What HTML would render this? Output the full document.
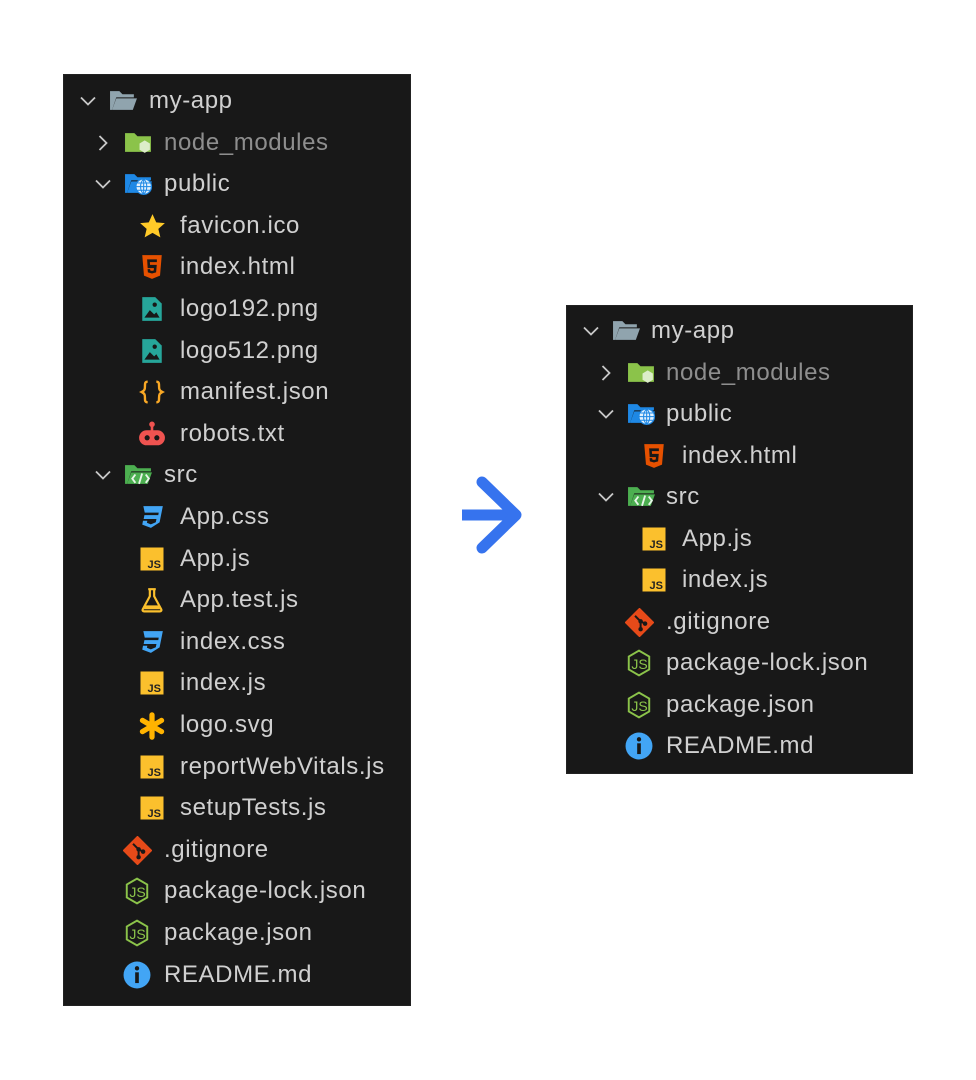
<!DOCTYPE html>
<html><head><meta charset="utf-8"><style>
html,body{margin:0;padding:0;background:#fff;width:976px;height:1080px;overflow:hidden}
.p{position:absolute;background:#181818;outline:1px solid #222}
.r{position:absolute;left:0;height:42px;width:100%}
.r span{position:absolute;top:0;line-height:42px;font-family:"Liberation Sans",sans-serif;font-size:24px;color:#d0d0d0;white-space:nowrap;letter-spacing:0.6px}
.r svg{position:absolute}
.g{color:#8e8e8e!important}
</style></head><body>
<svg width="0" height="0" style="position:absolute">
<defs>
<symbol id="cd" viewBox="0 0 18 18"><path d="M2 5.5 L9 12.5 L16 5.5" fill="none" stroke="#c8c8c8" stroke-width="1.8"/></symbol>
<symbol id="cr" viewBox="0 0 18 18"><path d="M5.5 2 L12.5 9 L5.5 16" fill="none" stroke="#c8c8c8" stroke-width="1.8"/></symbol>
<symbol id="fg" viewBox="0 0 28 22"><path d="M1 2h9l3 3h11v3H7L3 20H1z" fill="#90a4ae"/><path d="M7 9h20l-4 11H3z" fill="#90a4ae"/></symbol>
<symbol id="fn" viewBox="0 0 28 22"><path d="M1 2h9l3 3h13v15H1z" fill="#8bc34a"/><path d="M20 9l5 3v6l-5 3-5-3v-6z" fill="#dcedc8"/></symbol>
<symbol id="fp" viewBox="0 0 28 22"><path d="M1 2h9l3 3h13v3H7L3 20H1z" fill="#1e88e5"/><path d="M7 9h20l-4 11H3z" fill="#1e88e5"/><circle cx="19" cy="14" r="7.5" fill="#e3f2fd" stroke="#1e88e5" stroke-width="1.2"/><path d="M11.5 14h15M19 6.5v15M13 10.5h12M13 17.5h12M19 6.5c-4 4-4 11 0 15M19 6.5c4 4 4 11 0 15" fill="none" stroke="#1e88e5" stroke-width="1"/></symbol>
<symbol id="fs" viewBox="0 0 28 22"><path d="M1 2h9l3 3h13v3H7L3 20H1z" fill="#4caf50"/><path d="M7 9h20l-4 11H3z" fill="#4caf50"/><path d="M11 11l-3 4 3 4M21 11l3 4-3 4M17.5 10l-3 10" fill="none" stroke="#e8f5e9" stroke-width="1.8"/></symbol>
<symbol id="star" viewBox="0 0 24 24"><path d="M12 1l3.3 7.3 7.7.7-5.8 5.1 1.8 7.6L12 17.7l-7 4 1.8-7.6L1 9l7.7-.7z" fill="#ffca28"/></symbol>
<symbol id="html" viewBox="0 0 24 24"><path d="M3 1h18l-1.6 19L12 23l-7.4-3z" fill="#e65100"/><path d="M7.5 5h9v2.5H10l.2 2.5h6.2l-.6 7L12 18l-3.8-1-.3-3h2.4l.1 1.2 1.6.4 1.6-.4.2-2.2H8z" fill="#181818"/></symbol>
<symbol id="img" viewBox="0 0 24 24"><path d="M3 1h12l6 6v16H3z" fill="#26a69a"/><circle cx="14.5" cy="8" r="2" fill="#181818"/><path d="M5 20l5-7 4 4 2-2 3 5z" fill="#181818"/></symbol>
<symbol id="br" viewBox="0 0 24 24"><path d="M8 2.5C5.5 2.5 5.5 4 5.5 6.5s0 4-3 5.5c3 1.5 3 3 3 5.5s0 4 2.5 4M16 2.5c2.5 0 2.5 1.5 2.5 4s0 4 3 5.5c-3 1.5-3 3-3 5.5s0 4-2.5 4" fill="none" stroke="#f9a825" stroke-width="2.2"/></symbol>
<symbol id="bot" viewBox="0 0 26 24"><circle cx="13" cy="3" r="2.6" fill="#ef5350"/><rect x="11.8" y="4" width="2.4" height="5" fill="#ef5350"/><rect x="1" y="8.5" width="24" height="14" rx="7" fill="#ef5350"/><circle cx="8.5" cy="15.5" r="2.4" fill="#181818"/><circle cx="17.5" cy="15.5" r="2.4" fill="#181818"/></symbol>
<symbol id="css" viewBox="0 0 24 24"><path d="M4 2h18l-3 15-8 5-8-3 .7-3.5h4l-.4 1.8 3.6 1.5 4.6-2 .6-3H4.3l.7-3.5h12.8l.4-2.3H5.3z" fill="#42a5f5"/></symbol>
<symbol id="js" viewBox="0 0 24 24"><rect x="0.5" y="0.5" width="23" height="23" fill="#fbc02d"/><text x="21" y="21" text-anchor="end" font-family="Liberation Sans,sans-serif" font-weight="bold" font-size="11" fill="#222">JS</text></symbol>
<symbol id="flask" viewBox="0 0 24 24"><path d="M8.5 2h7M10 2v6.5L3.5 20.5c-.6 1.2.2 2 1.4 2h14.2c1.2 0 2-.8 1.4-2L14 8.5V2" fill="none" stroke="#fbc02d" stroke-width="2"/><path d="M6 17h12l1.5 3.5H4.5z" fill="#fbc02d"/></symbol>
<symbol id="ast" viewBox="0 0 24 24"><g stroke="#ffb300" stroke-width="4.5" stroke-linecap="round"><path d="M12 2.5v19M3.8 7.2l16.4 9.6M3.8 16.8l16.4-9.6"/></g></symbol>
<symbol id="git" viewBox="0 0 26 26"><path d="M13 1l12 12-12 12L1 13z" fill="#e64a19" stroke="#e64a19" stroke-width="2" stroke-linejoin="round"/><path d="M9 7l5 5v7M14 12l4 2" fill="none" stroke="#181818" stroke-width="1.8"/><circle cx="14" cy="12" r="2" fill="#181818"/><circle cx="14" cy="19" r="2" fill="#181818"/><circle cx="18" cy="14" r="2" fill="#181818"/></symbol>
<symbol id="node" viewBox="0 0 24 26"><path d="M12 1.5l9.5 5.5v12L12 24.5 2.5 19V7z" fill="none" stroke="#8bc34a" stroke-width="1.8"/><text x="12.5" y="18.5" text-anchor="middle" font-family="Liberation Sans,sans-serif" font-size="13" fill="#8bc34a">JS</text></symbol>
<symbol id="info" viewBox="0 0 26 26"><circle cx="13" cy="13" r="12.5" fill="#42a5f5"/><rect x="11.3" y="10.5" width="3.4" height="10" fill="#181818"/><circle cx="13" cy="6.8" r="2" fill="#181818"/></symbol>
</defs></svg>

<!-- LEFT PANEL -->
<div class="p" style="left:64px;top:75px;width:346px;height:930px">
<div class="r" style="top:5px"><svg style="left:15px;top:12px" width="18" height="18"><use href="#cd"/></svg><svg style="left:45px;top:9px" width="29" height="23"><use href="#fg"/></svg><span style="left:85px">my-app</span></div>
<div class="r" style="top:46.6px"><svg style="left:30px;top:12px" width="18" height="18"><use href="#cr"/></svg><svg style="left:60px;top:9px" width="29" height="23"><use href="#fn"/></svg><span class="g" style="left:100px">node_modules</span></div>
<div class="r" style="top:88.2px"><svg style="left:30px;top:12px" width="18" height="18"><use href="#cd"/></svg><svg style="left:60px;top:9px" width="29" height="23"><use href="#fp"/></svg><span style="left:100px">public</span></div>
<div class="r" style="top:129.8px"><svg style="left:75px;top:8px" width="27" height="27"><use href="#star"/></svg><span style="left:116px">favicon.ico</span></div>
<div class="r" style="top:171.4px"><svg style="left:75px;top:8px" width="26" height="26"><use href="#html"/></svg><span style="left:116px">index.html</span></div>
<div class="r" style="top:213px"><svg style="left:75px;top:8px" width="26" height="26"><use href="#img"/></svg><span style="left:116px">logo192.png</span></div>
<div class="r" style="top:254.6px"><svg style="left:75px;top:8px" width="26" height="26"><use href="#img"/></svg><span style="left:116px">logo512.png</span></div>
<div class="r" style="top:296.2px"><svg style="left:75px;top:8px" width="26" height="26"><use href="#br"/></svg><span style="left:116px">manifest.json</span></div>
<div class="r" style="top:337.8px"><svg style="left:74px;top:8px" width="28" height="26"><use href="#bot"/></svg><span style="left:116px">robots.txt</span></div>
<div class="r" style="top:379.4px"><svg style="left:30px;top:12px" width="18" height="18"><use href="#cd"/></svg><svg style="left:60px;top:9px" width="29" height="23"><use href="#fs"/></svg><span style="left:100px">src</span></div>
<div class="r" style="top:421px"><svg style="left:75px;top:8px" width="26" height="26"><use href="#css"/></svg><span style="left:116px">App.css</span></div>
<div class="r" style="top:462.6px"><svg style="left:76px;top:9px" width="24" height="24"><use href="#js"/></svg><span style="left:116px">App.js</span></div>
<div class="r" style="top:504.2px"><svg style="left:75px;top:8px" width="26" height="26"><use href="#flask"/></svg><span style="left:116px">App.test.js</span></div>
<div class="r" style="top:545.8px"><svg style="left:75px;top:8px" width="26" height="26"><use href="#css"/></svg><span style="left:116px">index.css</span></div>
<div class="r" style="top:587.4px"><svg style="left:76px;top:9px" width="24" height="24"><use href="#js"/></svg><span style="left:116px">index.js</span></div>
<div class="r" style="top:629px"><svg style="left:74px;top:8px" width="28" height="28"><use href="#ast"/></svg><span style="left:116px">logo.svg</span></div>
<div class="r" style="top:670.6px"><svg style="left:76px;top:9px" width="24" height="24"><use href="#js"/></svg><span style="left:116px">reportWebVitals.js</span></div>
<div class="r" style="top:712.2px"><svg style="left:76px;top:9px" width="24" height="24"><use href="#js"/></svg><span style="left:116px">setupTests.js</span></div>
<div class="r" style="top:753.8px"><svg style="left:59px;top:7px" width="29" height="29"><use href="#git"/></svg><span style="left:100px">.gitignore</span></div>
<div class="r" style="top:795.4px"><svg style="left:60px;top:7px" width="26" height="28"><use href="#node"/></svg><span style="left:100px">package-lock.json</span></div>
<div class="r" style="top:837px"><svg style="left:60px;top:7px" width="26" height="28"><use href="#node"/></svg><span style="left:100px">package.json</span></div>
<div class="r" style="top:878.6px"><svg style="left:59px;top:7px" width="28" height="28"><use href="#info"/></svg><span style="left:100px">README.md</span></div>
</div>

<!-- ARROW -->
<svg style="position:absolute;left:450px;top:470px" width="80" height="90" viewBox="0 0 80 90">
<path d="M12 45H66" stroke="#3673ee" stroke-width="11" fill="none"/>
<path d="M32 12L66 45L32 78" stroke="#3673ee" stroke-width="11" fill="none" stroke-linecap="round" stroke-linejoin="round"/>
</svg>

<!-- RIGHT PANEL -->
<div class="p" style="left:567px;top:306px;width:345px;height:467px">
<div class="r" style="top:4px"><svg style="left:15px;top:12px" width="18" height="18"><use href="#cd"/></svg><svg style="left:45px;top:9px" width="29" height="23"><use href="#fg"/></svg><span style="left:84px">my-app</span></div>
<div class="r" style="top:45.5px"><svg style="left:30px;top:12px" width="18" height="18"><use href="#cr"/></svg><svg style="left:60px;top:9px" width="29" height="23"><use href="#fn"/></svg><span class="g" style="left:99px">node_modules</span></div>
<div class="r" style="top:87px"><svg style="left:30px;top:12px" width="18" height="18"><use href="#cd"/></svg><svg style="left:60px;top:9px" width="29" height="23"><use href="#fp"/></svg><span style="left:99px">public</span></div>
<div class="r" style="top:128.5px"><svg style="left:74px;top:8px" width="26" height="26"><use href="#html"/></svg><span style="left:115px">index.html</span></div>
<div class="r" style="top:170px"><svg style="left:30px;top:12px" width="18" height="18"><use href="#cd"/></svg><svg style="left:60px;top:9px" width="29" height="23"><use href="#fs"/></svg><span style="left:99px">src</span></div>
<div class="r" style="top:211.5px"><svg style="left:75px;top:9px" width="24" height="24"><use href="#js"/></svg><span style="left:115px">App.js</span></div>
<div class="r" style="top:253px"><svg style="left:75px;top:9px" width="24" height="24"><use href="#js"/></svg><span style="left:115px">index.js</span></div>
<div class="r" style="top:294.5px"><svg style="left:58px;top:7px" width="29" height="29"><use href="#git"/></svg><span style="left:99px">.gitignore</span></div>
<div class="r" style="top:336px"><svg style="left:59px;top:7px" width="26" height="28"><use href="#node"/></svg><span style="left:99px">package-lock.json</span></div>
<div class="r" style="top:377.5px"><svg style="left:59px;top:7px" width="26" height="28"><use href="#node"/></svg><span style="left:99px">package.json</span></div>
<div class="r" style="top:419px"><svg style="left:58px;top:7px" width="28" height="28"><use href="#info"/></svg><span style="left:99px">README.md</span></div>
</div>
</body></html>
